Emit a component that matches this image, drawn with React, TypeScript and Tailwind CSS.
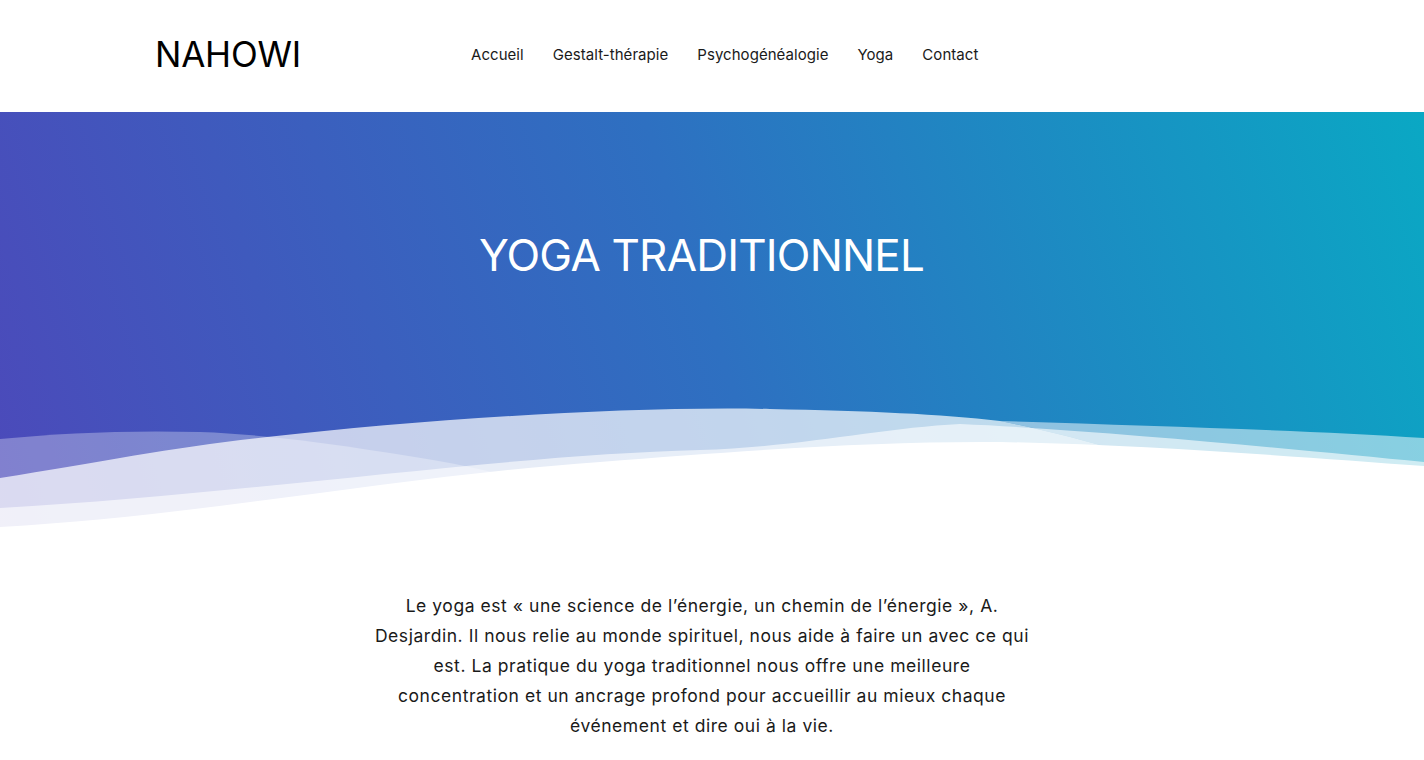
import React from "react";

function Waves() {
  return (
    <svg
      className="absolute left-0 bottom-0 w-full h-[160px]"
      viewBox="0 380 1424 160"
      preserveAspectRatio="none"
    >
      <path
        d="M0,439 C60,433 130,430 200,432 C280,435 360,448 433,460 C520,475 600,500 700,540 L0,540 Z"
        fill="#ffffff"
        fillOpacity="0.3"
      />
      <path
        d="M0,478 C100,462 180,446 267,437 C420,420 620,406 770,409 C870,411 940,414 1000,421 C1100,440 1250,490 1424,540 L0,540 Z"
        fill="#ffffff"
        fillOpacity="0.71"
      />
      <path
        d="M1000,421 C1150,426 1300,430 1424,438 L1424,540 C1250,490 1100,440 1000,421 Z"
        fill="#ffffff"
        fillOpacity="0.5"
      />
      <path
        d="M0,508 C250,494 500,455 700,450 C800,447 880,428 960,424 C1100,430 1300,450 1424,462 L1424,540 L0,540 Z"
        fill="#ffffff"
        fillOpacity="0.6"
      />
      <path
        d="M0,527 C200,516 400,476 600,462 C750,450 880,441 1000,442 C1150,445 1300,457 1424,466 L1424,540 L0,540 Z"
        fill="#ffffff"
      />
    </svg>
  );
}

export default function App() {
  const font = { fontFamily: "Inter, 'Noto Sans', sans-serif" };
  return (
    <div className="w-full min-h-[760px] bg-white" style={font}>
      <header className="h-[112px] bg-white">
        <div className="w-[1140px] mx-auto pl-[13px] h-full flex items-center">
          <div className="w-[316px] text-[35px] leading-none text-black tracking-[-0.2px] pb-[4px]">
            NAHOWI
          </div>
          <nav className="flex items-center gap-[29px] text-[15px] tracking-[0.05px] text-[#1a1a1a] pb-[2px]">
            <a>Accueil</a>
            <a>Gestalt-thérapie</a>
            <a>Psychogénéalogie</a>
            <a>Yoga</a>
            <a>Contact</a>
          </nav>
        </div>
      </header>
      <section className="relative h-[428px] overflow-hidden bg-[linear-gradient(72deg,#4c49ba_0%,#2e70c1_50%,#0aa8c4_100%)]">
        <div className="pt-[121px] pr-[21px] flex justify-center">
          <h1 className="text-[44px] leading-none text-white tracking-[-0.8px] font-normal">
            YOGA TRADITIONNEL
          </h1>
        </div>
        <Waves />
      </section>
      <section className="pt-[51px] pb-10 pr-[20px] flex justify-center">
        <p className="w-[720px] text-center text-[17.5px] tracking-[0.55px] leading-[30px] text-[#1a1a1a]">
          Le yoga est « une science de l’énergie, un chemin de l’énergie », A.
          <br />
          Desjardin. Il nous relie au monde spirituel, nous aide à faire un avec ce qui
          <br />
          est. La pratique du yoga traditionnel nous offre une meilleure
          <br />
          concentration et un ancrage profond pour accueillir au mieux chaque
          <br />
          événement et dire oui à la vie.
        </p>
      </section>
    </div>
  );
}
